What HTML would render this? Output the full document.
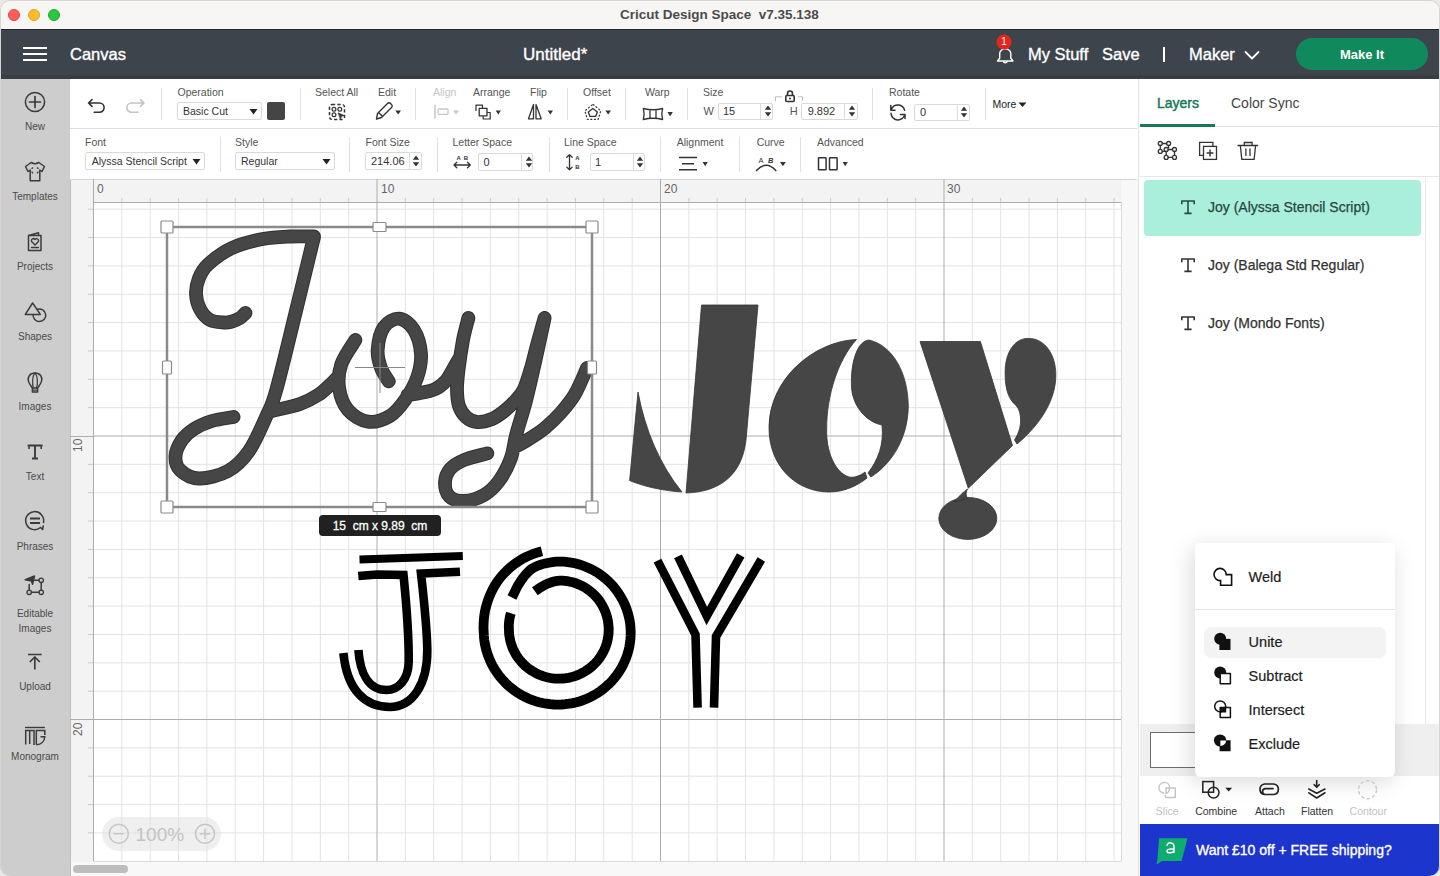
<!DOCTYPE html>
<html><head><meta charset="utf-8">
<style>
*{margin:0;padding:0;box-sizing:border-box}
html,body{width:1440px;height:876px;overflow:hidden;background:#fff}
body{position:relative;font-family:"Liberation Sans",sans-serif;color:#333}
.a{position:absolute}
.t{position:absolute;white-space:nowrap;line-height:1}
svg{position:absolute;overflow:visible}
#title{left:0;top:0;width:1440px;height:30px;background:#f7f6f4;border-bottom:1px solid #25282c}
#hdr{left:0;top:30px;width:1440px;height:49px;background:#3d444b;box-shadow:inset 0 -4px 0 #383e44}
#side{left:0;top:79px;width:70px;height:797px;background:#cdcdcd}
#tb{left:70px;top:79px;width:1069px;height:100px;background:#fff}
#canvas{left:70px;top:179px;width:1069px;height:697px;background:#f8f8f8}
#rp{left:1138px;top:79px;width:302px;height:797px;background:#fff;border-left:1px solid #e2e2e2}
.lbl{font-size:10px;color:#555}
.sl{font-size:10px;color:#4a4a4a;text-align:center;width:70px;left:0}
.dd{position:absolute;border:1px solid #d3d3d3;border-radius:2px;background:#fff;font-size:10.5px;color:#333}
.vd{position:absolute;width:1px;background:#dcdcdc}
</style></head><body>
<div id="title" class="a"></div>
<div id="hdr" class="a"></div>
<div id="side" class="a"></div>
<div id="tb" class="a"></div>
<div id="canvas" class="a"></div>
<div id="rp" class="a"></div>
<div class="a" style="left:70px;top:179px;width:1px;height:697px;background:#bdbdbd"></div>

<div class="a" style="left:8px;top:9px;width:12px;height:12px;border-radius:50%;background:#fe5f57;border:0.5px solid #e0443e"></div>
<div class="a" style="left:28px;top:9px;width:12px;height:12px;border-radius:50%;background:#febc2e;border:0.5px solid #dea123"></div>
<div class="a" style="left:48px;top:9px;width:12px;height:12px;border-radius:50%;background:#28c840;border:0.5px solid #1aab29"></div>
<div class="t" style="left:620px;top:7.5px;font-size:13.5px;font-weight:bold;color:#4b4b4b">Cricut Design Space&nbsp; v7.35.138</div>


<div class="a" style="left:23px;top:47px;width:24px;height:2px;background:#fff"></div>
<div class="a" style="left:23px;top:53px;width:24px;height:2px;background:#fff"></div>
<div class="a" style="left:23px;top:59px;width:24px;height:2px;background:#fff"></div>
<div class="t" style="left:70px;top:46px;font-size:16.5px;color:#fff;-webkit-text-stroke:0.35px #fff">Canvas</div>
<div class="t" style="left:523px;top:45.5px;font-size:17px;color:#fff;-webkit-text-stroke:0.35px #fff">Untitled*</div>
<div class="t" style="left:1028px;top:46px;font-size:16.5px;color:#fff;-webkit-text-stroke:0.35px #fff">My Stuff</div>
<div class="t" style="left:1102px;top:46px;font-size:16.5px;color:#fff;-webkit-text-stroke:0.35px #fff">Save</div>
<div class="a" style="left:1163px;top:47px;width:2px;height:15px;background:#fff"></div>
<div class="t" style="left:1189px;top:46px;font-size:16.5px;color:#fff;-webkit-text-stroke:0.35px #fff">Maker</div>
<div class="a" style="left:1296px;top:38px;width:132px;height:32px;border-radius:16px;background:#108a5c"></div>
<div class="t" style="left:1296px;top:47.5px;width:132px;text-align:center;font-size:13px;font-weight:bold;color:#fff">Make It</div>


<div class="t sl" style="top:122px">New</div>
<div class="t sl" style="top:192px">Templates</div>
<div class="t sl" style="top:262px">Projects</div>
<div class="t sl" style="top:332px">Shapes</div>
<div class="t sl" style="top:402px">Images</div>
<div class="t sl" style="top:472px">Text</div>
<div class="t sl" style="top:542px">Phrases</div>
<div class="t sl" style="top:608.5px">Editable</div>
<div class="t sl" style="top:623.5px">Images</div>
<div class="t sl" style="top:682px">Upload</div>
<div class="t sl" style="top:752px">Monogram</div>


<div class="a" style="left:70px;top:128px;width:1067px;height:1px;background:#dedede"></div>
<div class="a" style="left:70px;top:179px;width:1067px;height:1px;background:#d6d6d6"></div>

<!--TB-->
<div class="t" style="left:177.5px;top:87.1px;font-size:10.5px;color:#555">Operation</div>
<div class="t" style="left:315px;top:87.1px;font-size:10.5px;color:#555">Select All</div>
<div class="t" style="left:378px;top:87.1px;font-size:10.5px;color:#555">Edit</div>
<div class="t" style="left:473px;top:87.1px;font-size:10.5px;color:#555">Arrange</div>
<div class="t" style="left:530px;top:87.1px;font-size:10.5px;color:#555">Flip</div>
<div class="t" style="left:583px;top:87.1px;font-size:10.5px;color:#555">Offset</div>
<div class="t" style="left:645px;top:87.1px;font-size:10.5px;color:#555">Warp</div>
<div class="t" style="left:703px;top:87.1px;font-size:10.5px;color:#555">Size</div>
<div class="t" style="left:889px;top:87.1px;font-size:10.5px;color:#555">Rotate</div>
<div class="t" style="left:433px;top:87.1px;font-size:10.5px;color:#c4c4c4">Align</div>
<div class="t" style="left:992.5px;top:99.1px;font-size:10.5px;color:#222">More</div>
<svg width="10" height="6" style="left:1018px;top:102px"><path d="M0.5 0.5H8.5L4.5 5Z" fill="#222"/></svg>
<div class="t" style="left:85px;top:136.8px;font-size:10.5px;color:#555">Font</div>
<div class="t" style="left:235px;top:136.8px;font-size:10.5px;color:#555">Style</div>
<div class="t" style="left:365.5px;top:136.8px;font-size:10.5px;color:#555">Font Size</div>
<div class="t" style="left:452.5px;top:136.8px;font-size:10.5px;color:#555">Letter Space</div>
<div class="t" style="left:564px;top:136.8px;font-size:10.5px;color:#555">Line Space</div>
<div class="t" style="left:676.7px;top:136.8px;font-size:10.5px;color:#555">Alignment</div>
<div class="t" style="left:756.7px;top:136.8px;font-size:10.5px;color:#555">Curve</div>
<div class="t" style="left:817px;top:136.8px;font-size:10.5px;color:#555">Advanced</div>
<div class="a" style="left:161px;top:88px;width:1px;height:32px;background:#e0e0e0"></div>
<div class="a" style="left:300px;top:88px;width:1px;height:32px;background:#e0e0e0"></div>
<div class="a" style="left:415px;top:88px;width:1px;height:32px;background:#e0e0e0"></div>
<div class="a" style="left:567px;top:88px;width:1px;height:32px;background:#e0e0e0"></div>
<div class="a" style="left:625px;top:88px;width:1px;height:32px;background:#e0e0e0"></div>
<div class="a" style="left:687px;top:88px;width:1px;height:32px;background:#e0e0e0"></div>
<div class="a" style="left:872px;top:88px;width:1px;height:32px;background:#e0e0e0"></div>
<div class="a" style="left:985px;top:88px;width:1px;height:32px;background:#e0e0e0"></div>
<div class="a" style="left:220px;top:137px;width:1px;height:35px;background:#e0e0e0"></div>
<div class="a" style="left:349px;top:137px;width:1px;height:35px;background:#e0e0e0"></div>
<div class="a" style="left:437px;top:137px;width:1px;height:35px;background:#e0e0e0"></div>
<div class="a" style="left:549px;top:137px;width:1px;height:35px;background:#e0e0e0"></div>
<div class="a" style="left:660px;top:137px;width:1px;height:35px;background:#e0e0e0"></div>
<div class="a" style="left:739px;top:137px;width:1px;height:35px;background:#e0e0e0"></div>
<div class="a" style="left:800px;top:137px;width:1px;height:35px;background:#e0e0e0"></div>
<div class="a" style="left:177px;top:102px;width:85px;height:18px;border:1px solid #d9d9d9;border-radius:2px;background:#fff"></div>
<div class="t" style="left:183px;top:106.1px;font-size:10.5px;color:#333">Basic Cut</div>
<svg width="9" height="7" style="left:249px;top:107.5px"><path d="M0.5 1H8.5L4.5 6.5Z" fill="#222"/></svg>
<div class="a" style="left:267px;top:102px;width:18px;height:18px;border-radius:2px;background:#454545"></div>
<div class="a" style="left:718px;top:102.5px;width:55px;height:17.5px;border:1px solid #d9d9d9;border-radius:2px;background:#fff"></div>
<div class="t" style="left:723px;top:106.4px;font-size:11px;color:#333">15</div>
<div class="a" style="left:760px;top:103px;width:1px;height:16.5px;background:#dcdcdc"></div>
<svg width="8" height="12" style="left:763.5px;top:105.2px"><path d="M0.8 4.8L4 0.6L7.2 4.8Z M0.8 7.2L4 11.4L7.2 7.2Z" fill="#333"/></svg>
<div class="t" style="left:703.5px;top:106.4px;font-size:11px;color:#555">W</div>
<div class="t" style="left:789.7px;top:106.4px;font-size:11px;color:#555">H</div>
<div class="a" style="left:801px;top:102.5px;width:56.5px;height:17.5px;border:1px solid #d9d9d9;border-radius:2px;background:#fff"></div>
<div class="t" style="left:807.7px;top:106.4px;font-size:11px;color:#333">9.892</div>
<div class="a" style="left:844px;top:103px;width:1px;height:16.5px;background:#dcdcdc"></div>
<svg width="8" height="12" style="left:847.5px;top:105.2px"><path d="M0.8 4.8L4 0.6L7.2 4.8Z M0.8 7.2L4 11.4L7.2 7.2Z" fill="#333"/></svg>
<svg width="30" height="14" style="left:775px;top:89px"><path d="M0.5 12V7.8H7 M23 7.8H27.5V12" stroke="#bbb" stroke-width="1" fill="none"/><path d="M12.5 6.5V4.5A2.5 2.5 0 0 1 17.5 4.5V6.5" stroke="#333" stroke-width="1.6" fill="none"/><rect x="10.8" y="6.5" width="8.4" height="6" rx="1" stroke="#333" stroke-width="1.6" fill="none"/><circle cx="15" cy="9.5" r="1" fill="#333"/></svg>
<div class="a" style="left:913.5px;top:103.5px;width:56.5px;height:17.0px;border:1px solid #d9d9d9;border-radius:2px;background:#fff"></div>
<div class="t" style="left:920px;top:107.2px;font-size:11px;color:#333">0</div>
<div class="a" style="left:956.5px;top:104px;width:1px;height:16px;background:#dcdcdc"></div>
<svg width="8" height="12" style="left:960.0px;top:106.0px"><path d="M0.8 4.8L4 0.6L7.2 4.8Z M0.8 7.2L4 11.4L7.2 7.2Z" fill="#333"/></svg>
<div class="a" style="left:85px;top:152px;width:120px;height:18px;border:1px solid #d9d9d9;border-radius:2px;background:#fff"></div>
<div class="t" style="left:91.7px;top:156.1px;font-size:10.5px;color:#333">Alyssa Stencil Script</div>
<svg width="9" height="7" style="left:192px;top:157.5px"><path d="M0.5 1H8.5L4.5 6.5Z" fill="#222"/></svg>
<div class="a" style="left:235px;top:152px;width:100px;height:18px;border:1px solid #d9d9d9;border-radius:2px;background:#fff"></div>
<div class="t" style="left:241px;top:156.1px;font-size:10.5px;color:#333">Regular</div>
<svg width="9" height="7" style="left:322px;top:157.5px"><path d="M0.5 1H8.5L4.5 6.5Z" fill="#222"/></svg>
<div class="a" style="left:365px;top:152px;width:57px;height:18px;border:1px solid #d9d9d9;border-radius:2px;background:#fff"></div>
<div class="t" style="left:371px;top:156.2px;font-size:11px;color:#333">214.06</div>
<div class="a" style="left:408.5px;top:152.5px;width:1px;height:17.0px;background:#dcdcdc"></div>
<svg width="8" height="12" style="left:412.0px;top:155.0px"><path d="M0.8 4.8L4 0.6L7.2 4.8Z M0.8 7.2L4 11.4L7.2 7.2Z" fill="#333"/></svg>
<div class="a" style="left:478px;top:153px;width:55px;height:18px;border:1px solid #d9d9d9;border-radius:2px;background:#fff"></div>
<div class="t" style="left:483.5px;top:157.2px;font-size:11px;color:#333">0</div>
<div class="a" style="left:521px;top:153.5px;width:1px;height:17.0px;background:#dcdcdc"></div>
<svg width="8" height="12" style="left:524.5px;top:156.0px"><path d="M0.8 4.8L4 0.6L7.2 4.8Z M0.8 7.2L4 11.4L7.2 7.2Z" fill="#333"/></svg>
<div class="a" style="left:590px;top:153px;width:55px;height:18px;border:1px solid #d9d9d9;border-radius:2px;background:#fff"></div>
<div class="t" style="left:595px;top:157.2px;font-size:11px;color:#333">1</div>
<div class="a" style="left:632.5px;top:153.5px;width:1px;height:17.0px;background:#dcdcdc"></div>
<svg width="8" height="12" style="left:636.0px;top:156.0px"><path d="M0.8 4.8L4 0.6L7.2 4.8Z M0.8 7.2L4 11.4L7.2 7.2Z" fill="#333"/></svg>
<svg width="1440" height="876" style="left:0;top:0" fill="none" stroke-linecap="round" stroke-linejoin="round">
<!-- undo / redo -->
<path d="M92 99.6 L88.5 103 L92 106.4 M88.5 103 H99.5 A4.6 4.6 0 0 1 99.5 112.2 H94.2" stroke="#333" stroke-width="1.6"/>
<path d="M140.5 99.6 L144 103 L140.5 106.4 M144 103 H131.5 A4.6 4.6 0 0 0 131.5 112.2 H138" stroke="#c4c4c4" stroke-width="1.6"/>
<!-- select all -->
<rect x="329.5" y="104.5" width="15" height="15" rx="2.5" stroke="#333" stroke-width="1.5" stroke-dasharray="3.2 2.2" stroke-linecap="butt"/>
<circle cx="334" cy="109.2" r="1.9" stroke="#333" stroke-width="1.2"/>
<circle cx="339.8" cy="109.2" r="1.9" stroke="#333" stroke-width="1.2"/>
<circle cx="334" cy="114.7" r="1.9" stroke="#333" stroke-width="1.2"/>
<path d="M338.5 113 L344 115.5 L341.5 116.2 L340.5 118.8 Z" fill="#333" stroke="#333" stroke-width="0.8"/>
<!-- edit pencil -->
<path d="M376.5 119 L377.5 113.5 L387.5 103.5 A2 2 0 0 1 390.5 103.5 L391.5 104.5 A2 2 0 0 1 391.5 107.5 L381.5 117.5 Z M378.8 112.8 L381.8 115.8" stroke="#333" stroke-width="1.4"/>
<path d="M395.3 110.5 H401 L398.2 114.4 Z" fill="#333" stroke="none"/>
<!-- align (disabled) -->
<path d="M435 105.5 V118" stroke="#c8c8c8" stroke-width="1.6"/>
<rect x="438" y="109" width="10" height="5.4" rx="1" stroke="#c8c8c8" stroke-width="1.3"/>
<path d="M453 110.5 H459 L456 114.4 Z" fill="#c8c8c8" stroke="none"/>
<!-- arrange -->
<path d="M476 111 V105.2 H482.5 V108" stroke="#333" stroke-width="1.2" stroke-linecap="butt"/>
<rect x="479.2" y="108.3" width="7.8" height="7.5" stroke="#333" stroke-width="1.3"/>
<path d="M487 112.5 H490.2 V119 H483.2 V115.8" stroke="#333" stroke-width="1.2" stroke-linecap="butt"/>
<path d="M495.7 110.5 H500.9 L498.3 114.4 Z" fill="#333" stroke="none"/>
<!-- flip -->
<path d="M533.5 104.5 V118.8 H528.5 Z M536 104.5 V118.8 H541.2 Z" stroke="#333" stroke-width="1.3"/>
<path d="M547.6 110.5 H553 L550.3 114.4 Z" fill="#333" stroke="none"/>
<!-- offset -->
<path d="M592.8 104.3 L600.8 110.8 L598.2 119.4 H587.4 L584.9 110.8 Z" stroke="#333" stroke-width="1.2" stroke-dasharray="2 1.6" stroke-linecap="butt"/>
<path d="M592.8 108.4 L597.4 111.9 L595.6 116.4 H590 L588.3 111.9 Z" stroke="#333" stroke-width="1.3"/>
<path d="M605.3 110.5 H611 L608.2 114.4 Z" fill="#333" stroke="none"/>
<!-- warp -->
<path d="M643.3 108.5 Q653 111 662.6 108.5 Q661 114 662.6 119.5 Q653 117 643.3 119.5 Q645 114 643.3 108.5 Z M650 110 V118.5 M656 110 V118.5" stroke="#333" stroke-width="1.3"/>
<path d="M667.5 112 H672.8 L670.1 116.4 Z" fill="#333" stroke="none"/>
<!-- rotate -->
<path d="M904.6 110.2 A7 7 0 0 0 891.6 108.8 M890.8 105.5 V110.3 H895 M891 113.2 A7 7 0 0 0 904.8 114.6 M900.5 114.4 H905 V118.5" stroke="#333" stroke-width="1.5"/>
<!-- letter space -->
<text x="456.5" y="160" font-family="Liberation Sans" font-size="6" font-weight="bold" fill="#333" stroke="none">A</text>
<text x="463.8" y="160" font-family="Liberation Sans" font-size="6" font-weight="bold" fill="#333" stroke="none">B</text>
<path d="M454 165 H470.3 M456.8 162.2 L454 165 L456.8 167.8 M467.5 162.2 L470.3 165 L467.5 167.8" stroke="#333" stroke-width="1.3"/>
<!-- line space -->
<path d="M569.5 154.6 V169.8 M566.8 157.3 L569.5 154.6 L572.2 157.3 M566.8 167.1 L569.5 169.8 L572.2 167.1" stroke="#333" stroke-width="1.3"/>
<text x="575.2" y="160" font-family="Liberation Sans" font-size="6" font-weight="bold" fill="#333" stroke="none">A</text>
<text x="575.2" y="168.7" font-family="Liberation Sans" font-size="6" font-weight="bold" fill="#333" stroke="none">B</text>
<!-- alignment -->
<path d="M679 157.5 H697 M682 163.7 H694 M679 169.8 H697" stroke="#333" stroke-width="1.5" stroke-linecap="butt"/>
<path d="M702.6 162 H707.8 L705.2 166.3 Z" fill="#333" stroke="none"/>
<!-- curve -->
<text x="758.5" y="163.3" font-family="Liberation Sans" font-size="7.5" fill="#333" stroke="none">A</text>
<text x="768" y="163.3" font-family="Liberation Sans" font-size="7.5" font-style="italic" font-weight="bold" fill="#333" stroke="none">B</text>
<path d="M756.5 170.6 Q766.2 160 775.8 170.6" stroke="#333" stroke-width="1.5"/>
<path d="M780 162 H785.8 L782.9 166.3 Z" fill="#333" stroke="none"/>
<!-- advanced -->
<rect x="818.5" y="157.8" width="7.6" height="12" rx="0.5" stroke="#333" stroke-width="1.5"/>
<rect x="829.5" y="157.8" width="7.6" height="12" rx="0.5" stroke="#333" stroke-width="1.5"/>
<path d="M842.6 162 H847.8 L845.2 166.3 Z" fill="#333" stroke="none"/>
</svg>


<svg width="1440" height="876" style="left:0;top:0">
<rect x="71" y="180" width="1050" height="22" fill="#f3f3f3"/>
<rect x="71" y="180" width="22" height="682" fill="#f3f3f3"/>
<rect x="93" y="202" width="1028" height="659" fill="#fff"/>
<path d="M121.85 202V861 M150.20 202V861 M178.55 202V861 M206.90 202V861 M235.25 202V861 M263.60 202V861 M291.95 202V861 M320.30 202V861 M348.65 202V861 M405.35 202V861 M433.70 202V861 M462.05 202V861 M490.40 202V861 M518.75 202V861 M547.10 202V861 M575.45 202V861 M603.80 202V861 M632.15 202V861 M688.85 202V861 M717.20 202V861 M745.55 202V861 M773.90 202V861 M802.25 202V861 M830.60 202V861 M858.95 202V861 M887.30 202V861 M915.65 202V861 M972.35 202V861 M1000.70 202V861 M1029.05 202V861 M1057.40 202V861 M1085.75 202V861 M1114.10 202V861 M93 209.20H1121 M93 237.55H1121 M93 265.90H1121 M93 294.25H1121 M93 322.60H1121 M93 350.95H1121 M93 379.30H1121 M93 407.65H1121 M93 464.35H1121 M93 492.70H1121 M93 521.05H1121 M93 549.40H1121 M93 577.75H1121 M93 606.10H1121 M93 634.45H1121 M93 662.80H1121 M93 691.15H1121 M93 747.85H1121 M93 776.20H1121 M93 804.55H1121 M93 832.90H1121" stroke="#e3e3e3" stroke-width="1" fill="none"/>
<path d="M93.50 202V861 M377.00 202V861 M660.50 202V861 M944.00 202V861 M93 436.00H1121 M93 719.50H1121" stroke="#adadad" stroke-width="1" fill="none"/>
<path d="M121.85 198V202 M150.20 198V202 M178.55 198V202 M206.90 198V202 M235.25 198V202 M263.60 198V202 M291.95 198V202 M320.30 198V202 M348.65 198V202 M405.35 198V202 M433.70 198V202 M462.05 198V202 M490.40 198V202 M518.75 198V202 M547.10 198V202 M575.45 198V202 M603.80 198V202 M632.15 198V202 M688.85 198V202 M717.20 198V202 M745.55 198V202 M773.90 198V202 M802.25 198V202 M830.60 198V202 M858.95 198V202 M887.30 198V202 M915.65 198V202 M972.35 198V202 M1000.70 198V202 M1029.05 198V202 M1057.40 198V202 M1085.75 198V202 M1114.10 198V202 M88 209.20H93 M88 237.55H93 M88 265.90H93 M88 294.25H93 M88 322.60H93 M88 350.95H93 M88 379.30H93 M88 407.65H93 M88 464.35H93 M88 492.70H93 M88 521.05H93 M88 549.40H93 M88 577.75H93 M88 606.10H93 M88 634.45H93 M88 662.80H93 M88 691.15H93 M88 747.85H93 M88 776.20H93 M88 804.55H93 M88 832.90H93" stroke="#c9c9c9" stroke-width="1" fill="none"/>
<path d="M93.5 179V202 M377 179V202 M660.5 179V202 M944 179V202 M70 436.5H93 M70 719.5H93 M93 202.5H1121" stroke="#adadad"/><path d="M1121.5 202V861 M93 861.5H1121" stroke="#dadada" stroke-width="1" fill="none"/>
</svg>
<div class="t" style="left:97px;top:183px;font-size:12px;color:#666">0</div>
<div class="t" style="left:381px;top:183px;font-size:12px;color:#666">10</div>
<div class="t" style="left:664px;top:183px;font-size:12px;color:#666">20</div>
<div class="t" style="left:947px;top:183px;font-size:12px;color:#666">30</div>
<div class="t" style="left:72px;top:440px;font-size:12px;color:#666;transform-origin:0 0;transform:translate(0,12px) rotate(-90deg)">10</div>
<div class="t" style="left:72px;top:724px;font-size:12px;color:#666;transform-origin:0 0;transform:translate(0,12px) rotate(-90deg)">20</div>

<svg width="1440" height="876" style="left:0;top:0">
<path d="M245.5 313 C244.6 313.8 242.2 316.6 240 318 C237.8 319.4 234.7 320.8 232 321.5 C229.3 322.2 227.7 322.8 224 322.5 C220.3 322.2 214.0 322.2 210 320 C206.0 317.8 202.3 313.3 200 309 C197.7 304.7 196.2 299.2 196 294 C195.8 288.8 197.0 282.9 199 278 C201.0 273.1 202.5 269.5 208 264.5 C213.5 259.5 222.9 252.2 232 248 C241.1 243.8 253.0 240.9 262.7 239 C272.4 237.1 281.4 236.9 290 236.5 C298.6 236.1 310.0 236.5 314 236.5 M314 237 C310.8 250.0 301.3 289.3 295 315 C288.7 340.7 280.8 374.0 276 391 C271.2 408.0 270.5 407.0 266 417 C261.5 427.0 255.3 442.0 249 451 C242.7 460.0 236.3 466.4 228 471 C219.7 475.6 207.0 478.7 199 478.5 C191.0 478.3 183.9 473.8 180 470 C176.1 466.2 175.2 461.0 175.5 456 C175.8 451.0 178.9 444.5 182 440 C185.1 435.5 189.0 432.2 194 429 C199.0 425.8 205.4 423.0 212 421 C218.6 419.0 230.0 417.7 233.6 417 M272 411 C276.7 409.8 292.3 406.7 300 404 C307.7 401.3 313.0 398.2 318 395 C323.0 391.8 326.8 387.8 330 385 C333.2 382.2 335.8 379.2 337 378 M355.4 340 C353.0 344.1 344.0 356.3 341.3 364.3 C338.6 372.3 338.0 380.4 339.1 388 C340.2 395.6 343.2 404.4 348 410 C352.8 415.6 361.0 420.7 368 421.7 C375.0 422.7 383.8 419.6 390 416 C396.2 412.4 400.5 406.3 405 400 C409.5 393.7 414.3 385.7 417 378 C419.7 370.3 421.5 362.0 421 354 C420.5 346.0 417.6 335.9 414 330 C410.4 324.1 404.2 319.2 399.2 318.7 C394.2 318.2 387.6 321.9 384 327 C380.4 332.1 378.2 342.7 377.7 349.5 C377.2 356.3 379.1 362.7 381 368 C382.9 373.3 387.5 379.2 388.8 381.4 M407.5 395 C409.2 394.8 413.4 394.4 418 393.5 C422.6 392.6 430.2 391.4 434.8 389.3 C439.4 387.2 442.9 384.1 445.8 381 C448.7 377.9 449.7 374.8 452 371 C454.3 367.2 458.2 360.2 459.5 358 M468.4 318 C467.5 321.7 464.6 331.3 463 340 C461.4 348.7 459.5 361.7 458.5 370 C457.5 378.3 456.9 384.0 457 390 C457.1 396.0 457.5 401.5 459 406 C460.5 410.5 463.0 414.3 466 417 C469.0 419.7 472.7 421.7 477 422 C481.3 422.3 487.3 420.9 492 419 C496.7 417.1 501.0 413.7 505 410.5 C509.0 407.3 512.8 403.6 516 400 C519.2 396.4 521.5 394.3 524 389 C526.5 383.7 528.8 375.3 531 368 C533.2 360.7 534.7 353.3 537 345 C539.3 336.7 543.3 322.5 544.6 318 M544.6 318 C543.1 325.0 538.6 346.2 535.5 360 C532.4 373.8 529.2 388.3 526 400.7 C522.8 413.1 518.9 424.6 516.3 434.3 C513.7 444.0 513.5 451.2 510.6 459 C507.7 466.8 503.4 475.0 499 481 C494.6 487.0 489.8 491.7 484 495 C478.2 498.3 469.8 500.8 464 501 C458.2 501.2 452.6 499.6 449.4 496.5 C446.2 493.4 444.8 487.0 445 482.4 C445.2 477.8 447.2 472.5 450.4 468.8 C453.6 465.1 457.9 462.6 464 460 C470.1 457.4 483.4 454.4 487.3 453.3 M515 447 C516.5 446.2 521.0 443.8 524 442 C527.0 440.2 529.5 438.8 533 436.5 C536.5 434.2 540.3 432.0 545 428 C549.7 424.0 556.0 418.2 561 412.5 C566.0 406.8 570.7 401.4 575 394 C579.3 386.6 585.0 372.3 587 368" stroke="#303030" stroke-width="13.8" fill="none" stroke-linecap="round" stroke-linejoin="round"/>
<path d="M245.5 313 C244.6 313.8 242.2 316.6 240 318 C237.8 319.4 234.7 320.8 232 321.5 C229.3 322.2 227.7 322.8 224 322.5 C220.3 322.2 214.0 322.2 210 320 C206.0 317.8 202.3 313.3 200 309 C197.7 304.7 196.2 299.2 196 294 C195.8 288.8 197.0 282.9 199 278 C201.0 273.1 202.5 269.5 208 264.5 C213.5 259.5 222.9 252.2 232 248 C241.1 243.8 253.0 240.9 262.7 239 C272.4 237.1 281.4 236.9 290 236.5 C298.6 236.1 310.0 236.5 314 236.5 M314 237 C310.8 250.0 301.3 289.3 295 315 C288.7 340.7 280.8 374.0 276 391 C271.2 408.0 270.5 407.0 266 417 C261.5 427.0 255.3 442.0 249 451 C242.7 460.0 236.3 466.4 228 471 C219.7 475.6 207.0 478.7 199 478.5 C191.0 478.3 183.9 473.8 180 470 C176.1 466.2 175.2 461.0 175.5 456 C175.8 451.0 178.9 444.5 182 440 C185.1 435.5 189.0 432.2 194 429 C199.0 425.8 205.4 423.0 212 421 C218.6 419.0 230.0 417.7 233.6 417 M272 411 C276.7 409.8 292.3 406.7 300 404 C307.7 401.3 313.0 398.2 318 395 C323.0 391.8 326.8 387.8 330 385 C333.2 382.2 335.8 379.2 337 378 M355.4 340 C353.0 344.1 344.0 356.3 341.3 364.3 C338.6 372.3 338.0 380.4 339.1 388 C340.2 395.6 343.2 404.4 348 410 C352.8 415.6 361.0 420.7 368 421.7 C375.0 422.7 383.8 419.6 390 416 C396.2 412.4 400.5 406.3 405 400 C409.5 393.7 414.3 385.7 417 378 C419.7 370.3 421.5 362.0 421 354 C420.5 346.0 417.6 335.9 414 330 C410.4 324.1 404.2 319.2 399.2 318.7 C394.2 318.2 387.6 321.9 384 327 C380.4 332.1 378.2 342.7 377.7 349.5 C377.2 356.3 379.1 362.7 381 368 C382.9 373.3 387.5 379.2 388.8 381.4 M407.5 395 C409.2 394.8 413.4 394.4 418 393.5 C422.6 392.6 430.2 391.4 434.8 389.3 C439.4 387.2 442.9 384.1 445.8 381 C448.7 377.9 449.7 374.8 452 371 C454.3 367.2 458.2 360.2 459.5 358 M468.4 318 C467.5 321.7 464.6 331.3 463 340 C461.4 348.7 459.5 361.7 458.5 370 C457.5 378.3 456.9 384.0 457 390 C457.1 396.0 457.5 401.5 459 406 C460.5 410.5 463.0 414.3 466 417 C469.0 419.7 472.7 421.7 477 422 C481.3 422.3 487.3 420.9 492 419 C496.7 417.1 501.0 413.7 505 410.5 C509.0 407.3 512.8 403.6 516 400 C519.2 396.4 521.5 394.3 524 389 C526.5 383.7 528.8 375.3 531 368 C533.2 360.7 534.7 353.3 537 345 C539.3 336.7 543.3 322.5 544.6 318 M544.6 318 C543.1 325.0 538.6 346.2 535.5 360 C532.4 373.8 529.2 388.3 526 400.7 C522.8 413.1 518.9 424.6 516.3 434.3 C513.7 444.0 513.5 451.2 510.6 459 C507.7 466.8 503.4 475.0 499 481 C494.6 487.0 489.8 491.7 484 495 C478.2 498.3 469.8 500.8 464 501 C458.2 501.2 452.6 499.6 449.4 496.5 C446.2 493.4 444.8 487.0 445 482.4 C445.2 477.8 447.2 472.5 450.4 468.8 C453.6 465.1 457.9 462.6 464 460 C470.1 457.4 483.4 454.4 487.3 453.3 M515 447 C516.5 446.2 521.0 443.8 524 442 C527.0 440.2 529.5 438.8 533 436.5 C536.5 434.2 540.3 432.0 545 428 C549.7 424.0 556.0 418.2 561 412.5 C566.0 406.8 570.7 401.4 575 394 C579.3 386.6 585.0 372.3 587 368" stroke="#464646" stroke-width="11.8" fill="none" stroke-linecap="round" stroke-linejoin="round"/>
<g fill="#464646" stroke="#333" stroke-width="0.8">
<path d="M701.5 305 L758 305 L746 440 C742 475 720 492 686 493 Z"/>
<path d="M638 392 C645 430 660 465 682 492 C665 491 645 487 629.6 480.6 Z"/>
<path d="M856.5 339.5 C815 341 769 378 769 428 C769 466 796 492 829 492 C844 492 857 486 867 478 L865 472 C860 476 854 478 849 477 C834 472 826 450 826.7 428.8 C826.7 395 838 360 856.5 339.5 Z"/>
<path d="M868.8 340 C892 345 908 372 908.3 406 C908 440 890 465 870.9 477 L868 473 C878 460 884 445 882 425 C866 422 851 405 851.4 383.7 C851 360 858 341 868.8 340 Z"/>
<path d="M920 341.5 L980.4 341.5 L1012.5 445.6 L968.3 488.2 Z"/>
<path d="M1028.2 338.4 C1045 338 1056 355 1055.8 375 C1056 400 1040 425 1017 444 L1014.5 440 C1019.5 432 1021 425 1020.5 418 C1020 411 1018 407.5 1015 404.5 C1009 399 1005 390 1005.1 372.5 C1005 352 1015 338 1028.2 338.4 Z"/>
<ellipse cx="967.8" cy="518.4" rx="29" ry="21"/>
<path d="M954 502 C959 496 963 492.5 967.5 489 C966 492 965.5 495 967.5 498.5 Z"/>
</g>
<g stroke="#000" stroke-width="8" fill="none" stroke-linejoin="miter">
<path d="M359.5 559.6 L462.8 555.9"/>
<path d="M358.3 576 L377 574.5 L403.5 575 C406 600 409 630 408.7 661.5 C408.5 680 398 690 386.5 690 C368 690 360 672 358.4 650" stroke-width="8.6"/>
<path d="M460 571.7 L421 573.5 C424 600 427 630 427.3 650 C427.5 685 412 707 390 707 C365 707 347 690 343.4 653" stroke-width="8.6"/>
<path d="M541.9 551.3 L537.7 552.4 L533.5 553.8 L529.5 555.4 L525.6 557.2 L521.8 559.3 L518.1 561.6 L514.6 564.0 L511.3 566.6 L508.1 569.4 L505.0 572.4 L502.1 575.5 L499.5 578.7 L497.0 582.1 L494.8 585.6 L492.7 589.3 L490.9 593.0 L489.3 596.7 L487.9 600.5 L486.7 604.4 L485.6 608.3 L484.8 612.2 L484.2 616.2 L483.8 620.1 L483.6 624.1 L483.5 628.0 L483.7 631.9 L483.9 635.8 L484.2 639.7 L484.8 643.5 L485.6 647.3 L486.6 651.1 L487.8 654.8 L489.2 658.4 L490.7 661.9 L492.4 665.4 L494.3 668.7 L496.4 671.9 L498.6 675.1 L501.0 678.1 L503.6 680.9 L506.2 683.7 L509.0 686.3 L512.0 688.7 L515.0 691.0 L518.2 693.1 L521.4 695.0 L524.8 696.8 L528.3 698.4 L531.8 699.9 L535.4 701.1 L539.0 702.2 L542.7 703.0 L546.4 703.7 L550.2 704.2 L554.0 704.5 L557.8 704.6 L561.6 704.5 L565.3 704.2 L569.1 703.7 L572.8 703.1 L576.5 702.2 L580.2 701.2 L583.8 699.9 L587.3 698.5 L590.8 696.9 L594.1 695.1 L597.4 693.1 L600.6 691.0 L603.6 688.7 L606.5 686.2 L609.3 683.6 L612.0 680.9 L614.5 678.0 L616.8 675.0 L619.0 671.8 L621.1 668.5 L622.9 665.2 L624.5 661.7 L626.0 658.2 L627.3 654.5 L628.4 650.8 L629.3 647.1 L629.9 643.3 L630.4 639.5 L630.6 635.7 L630.7 631.8 L630.5 628.0 L630.2 624.1 L629.6 620.3 L628.8 616.6 L627.8 612.9 L626.6 609.2 L625.3 605.7 L623.7 602.2 L621.9 598.8 L620.0 595.5 L617.9 592.3 L615.6 589.2 L613.2 586.2 L610.6 583.4 L607.9 580.8 L605.1 578.3 L602.1 575.9 L599.0 573.7 L595.8 571.7 L592.5 569.8 L589.1 568.2 L585.6 566.7 L582.1 565.4 L578.5 564.3 L574.9 563.3 L571.2 562.6 L567.5 562.1 L563.7 561.7 L560.0 561.6 L556.2 561.7 L552.5 562.1 L548.8 562.7 L545.2 563.4 L541.6 564.4 L538.2 565.6 L534.8 567.1 L531.6 568.9 L528.7 571.3 L526.1 574.0 L523.7 576.9 L521.6 579.8 L519.6 582.8 L517.8 585.7 L516.2 588.8 L514.8 591.8 L513.4 594.7 L512.0 597.5" stroke-width="9.8"/>
<path d="M510.9 613.2 L510.1 615.7 L509.6 618.3 L509.2 620.9 L508.9 623.6 L508.8 626.2 L508.9 628.8 L509.0 631.4 L509.1 634.1 L509.5 636.6 L509.9 639.2 L510.5 641.8 L511.3 644.3 L512.1 646.7 L513.1 649.1 L514.3 651.5 L515.5 653.8 L516.8 656.0 L518.3 658.1 L519.9 660.2 L521.6 662.1 L523.4 664.0 L525.2 665.8 L527.2 667.5 L529.2 669.1 L531.4 670.5 L533.6 671.9 L535.8 673.1 L538.1 674.2 L540.5 675.2 L542.9 676.1 L545.4 676.9 L547.9 677.5 L550.4 678.0 L552.9 678.4 L555.5 678.6 L558.0 678.7 L560.6 678.7 L563.2 678.5 L565.7 678.2 L568.3 677.8 L570.8 677.3 L573.2 676.6 L575.7 675.8 L578.1 674.9 L580.4 673.9 L582.7 672.7 L585.0 671.4 L587.2 670.0 L589.2 668.5 L591.3 666.9 L593.2 665.2 L595.0 663.4 L596.8 661.5 L598.4 659.5 L600.0 657.4 L601.4 655.2 L602.7 653.0 L603.9 650.7 L605.0 648.3 L605.9 645.9 L606.7 643.4 L607.4 640.9 L607.9 638.3 L608.3 635.8 L608.6 633.2 L608.7 630.6 L608.7 628.0 L608.5 625.4 L608.2 622.8 L607.8 620.2 L607.2 617.7 L606.5 615.1 L605.7 612.7 L604.7 610.2 L603.6 607.9 L602.4 605.6 L601.1 603.3 L599.6 601.2 L598.1 599.1 L596.4 597.1 L594.6 595.2 L592.8 593.4 L590.8 591.7 L588.8 590.1 L586.6 588.6 L584.4 587.2 L582.1 586.0 L579.8 584.9 L577.4 583.9 L575.0 583.0 L572.5 582.3 L570.0 581.7 L567.4 581.2 L564.9 580.9 L562.3 580.7 L559.8 580.7 L557.2 580.9 L554.7 581.3 L552.2 582.0 L549.8 582.8 L547.4 583.7 L545.2 584.8 L543.0 586.0 L540.9 587.2 L538.8 588.5 L536.8 589.9 L534.9 591.3" stroke-width="9.8"/>
<path d="M657.5 560.6 L695.5 634.6 L697.6 707.6" stroke-width="8.6"/>
<path d="M678 556.4 L706.8 616 L740.7 555.4" stroke-width="8.6"/>
<path d="M761.3 559.5 L716 636.6 L714 707.6" stroke-width="8.6"/>
</g>
<g stroke="#8a8a8a" fill="none">
<rect x="167" y="227" width="425" height="280" stroke-width="2.5"/>
<path d="M355 367.5H405 M380 343V393" stroke="#888" stroke-width="1"/>
</g>
<g fill="#fff" stroke="#8a8a8a" stroke-width="1.2">
<rect x="161" y="221" width="12" height="12" rx="1"/>
<rect x="586" y="221" width="12" height="12" rx="1"/>
<rect x="161" y="501" width="12" height="12" rx="1"/>
<rect x="586" y="501" width="12" height="12" rx="1"/>
<rect x="373" y="222.5" width="13" height="9" rx="1"/>
<rect x="373" y="502.5" width="13" height="9" rx="1"/>
<rect x="162.5" y="361" width="9" height="13" rx="1"/>
<rect x="587.5" y="361" width="9" height="13" rx="1"/>
</g>
</svg>
<div class="a" style="left:319px;top:515px;width:122px;height:21px;border-radius:4px;background:#212121"></div>
<div class="t" style="left:319px;top:519.5px;width:122px;text-align:center;font-size:12px;color:#fff;-webkit-text-stroke:0.3px #fff">15&nbsp; cm x 9.89&nbsp; cm</div>

<div class="t" style="left:1157px;top:96px;font-size:14px;color:#17785a;-webkit-text-stroke:0.45px #17785a">Layers</div>
<div class="t" style="left:1231px;top:96px;font-size:14px;color:#444">Color Sync</div>
<div class="a" style="left:1140px;top:126px;width:300px;height:1px;background:#e0e0e0"></div>
<div class="a" style="left:1140px;top:124px;width:75px;height:3px;background:#17785a"></div>
<div class="a" style="left:1140px;top:176px;width:300px;height:1px;background:#e6e6e6"></div>
<div class="a" style="left:1144px;top:180px;width:277px;height:56px;border-radius:4px;background:#aaefdc"></div>
<div class="t" style="left:1208px;top:200px;font-size:14px;color:#27473d;-webkit-text-stroke:0.25px currentColor">Joy (Alyssa Stencil Script)</div>
<div class="t" style="left:1208px;top:258px;font-size:14px;color:#333;-webkit-text-stroke:0.25px currentColor">Joy (Balega Std Regular)</div>
<div class="t" style="left:1208px;top:316px;font-size:14px;color:#333;-webkit-text-stroke:0.25px currentColor">Joy (Mondo Fonts)</div>

<div class="a" style="left:1140px;top:824px;width:300px;height:52px;background:#1c35cc;border-bottom-right-radius:10px"></div>
<div class="t" style="left:1196px;top:842.5px;font-size:14px;color:#fff;-webkit-text-stroke:0.35px #fff">Want £10 off + FREE shipping?</div>
<svg width="1440" height="876" style="left:0;top:0" fill="none" stroke-linecap="round" stroke-linejoin="round">
<!-- sidebar -->
<g stroke="#3a3a3a" stroke-width="1.5">
<circle cx="35" cy="102" r="9.6"/>
<path d="M35 96.5 V107.5 M29.5 102 H40.5" stroke-width="1.7"/>
<path d="M31.2 162.5 L25.5 166.5 L28 171.5 L30.2 170 V180.8 H39.8 V170 L42 171.5 L44.5 166.5 L38.8 162.5 Q35 165 31.2 162.5 Z"/>
<path d="M32 167.8 h1.2 M36.8 167.8 h1.2 M32 172.8 h1.2 M36.8 172.8 h1.2 M32 167.8 v1.2 M38 167.8 v1.2 M32 171.6 v1.2 M38 171.6 v1.2" stroke-width="1.2" stroke-linecap="butt"/>
<path d="M28.5 235.5 L38.5 232.8 V235.5 M28.5 235.5 H41 V250.5 H28.5 Z"/>
<path d="M35 245 L31.8 241.8 A1.8 1.8 0 0 1 35 239.5 A1.8 1.8 0 0 1 38.2 241.8 Z" stroke-width="1.4"/>
<path d="M31.5 247.5 H38.5" stroke-width="1.3"/>
<path d="M32.6 303 L25.3 314.4 H40.3 Z"/>
<path d="M33.2 314.4 A6.3 6.3 0 1 0 37.5 309.3" />
<path d="M35 373 C29.5 373 27.8 377 28.3 380.5 C28.8 384 31.5 386.5 32.3 388 H37.7 C38.5 386.5 41.2 384 41.7 380.5 C42.2 377 40.5 373 35 373 Z"/>
<path d="M35 373 C32.3 375.5 32 384 33.5 388 M35 373 C37.7 375.5 38 384 36.5 388" stroke-width="1.2"/>
<path d="M32.3 388.5 V392 H37.7 V388.5 M32.3 390.2 H37.7" stroke-width="1.3"/>
<path d="M28.5 446.5 V445.5 H41.7 V446.5 M35 445.5 V458.5 M32 458.5 H38" stroke-width="1.9" stroke-linecap="butt"/>
<path d="M29 449 V446.2 M41.2 449 V446.2" stroke-width="1.6" stroke-linecap="butt"/>
<path d="M40.5 527.5 A9 9 0 1 1 43.5 522.5" />
<path d="M40.5 527.5 L42.6 529.5 L43.2 526" stroke-width="1.5"/>
<path d="M30 518.5 H40 M30 523 H40" stroke-width="1.8" stroke-linecap="butt"/>
<path d="M25.2 579.8 L34.5 576 L32.5 584.2 L31.5 581 Z" fill="#3a3a3a"/>
<path d="M34 580.3 H39 M41.2 582.5 V590 M31.3 592.3 H38.9 M29.2 584.5 V590"/>
<circle cx="41.2" cy="580.3" r="2.2" stroke-width="1.3"/>
<circle cx="29.2" cy="592.3" r="2.2" stroke-width="1.3"/>
<circle cx="41.2" cy="592.3" r="2.2" stroke-width="1.3"/>
<path d="M28 654.5 H41.7 M34.8 669.5 V657 M29.8 662 L34.8 657 L39.8 662" stroke-width="1.7" stroke-linecap="butt"/>
<path d="M25 727.5 H44.9" stroke-width="1.4" stroke-linecap="butt"/>
<path d="M25.7 744.5 V730.5 H34 V745 M29.7 744 V730.5 M36.3 744.8 V730.5 H44.8 V735 M36.3 744.8 C41 744.5 44.6 741.5 44.8 736.8 H40.5" stroke-width="1.5" stroke-linecap="butt" stroke-linejoin="miter"/>
</g>
<!-- header bell -->
<path d="M997.5 61 H1013 L1010.8 58.2 V53 A5.8 5.8 0 0 0 999.7 53 V58.2 Z M1003.2 61.2 A2.1 2.1 0 0 0 1007.3 61.2" stroke="#fff" stroke-width="1.4"/>
<circle cx="1004" cy="42" r="7.6" fill="#e3261b"/>
<path d="M1245.5 52 L1252 58.5 L1258.5 52" stroke="#fff" stroke-width="1.8"/>
<!-- right panel top icons -->
<g stroke="#333" stroke-width="1.3">
<path d="M1162.3 143.5 H1166.6 M1160.3 145.5 V149.4 M1162.3 151.4 H1164.2 M1168.6 145.5 V147.5"/>
<path d="M1168.2 149.5 H1172.5 M1166.2 151.5 V155.4 M1168.2 157.4 H1172.5 M1174.5 151.5 V155.4"/>
<circle cx="1160.3" cy="143.5" r="2"/><circle cx="1168.6" cy="143.5" r="2"/><circle cx="1160.3" cy="151.4" r="2"/>
<circle cx="1166.2" cy="149.5" r="2"/><circle cx="1174.5" cy="149.5" r="2"/><circle cx="1166.2" cy="157.4" r="2"/><circle cx="1174.5" cy="157.4" r="2"/>
<path d="M1203.4 155.4 H1199.6 V142.4 H1212.9 V146.3" stroke-linejoin="miter" stroke-linecap="butt"/>
<rect x="1203.5" y="146.4" width="13" height="13" stroke-linejoin="miter"/>
<path d="M1210 149.6 V156.4 M1206.6 153 H1213.4" stroke-width="1.4" stroke-linecap="butt"/>
<path d="M1238 145.5 H1257.6 M1244.3 145.3 V142.5 H1252.1 V145.3 M1240.3 145.5 L1241.8 159.3 H1254.1 L1255.6 145.5 M1245.9 149 V155.5 M1250 149 V155.5" stroke-linejoin="miter"/>
</g>
<!-- layer T icons -->
<path d="M1181.8 204.3 V201 H1194.2 V204.3 M1188 201 V213.4 M1184.4 213.4 H1191.6" stroke="#274a3f" stroke-width="1.6" stroke-linecap="butt"/>
<path d="M1181.8 262.3 V259 H1194.2 V262.3 M1188 259 V271.4 M1184.4 271.4 H1191.6" stroke="#333" stroke-width="1.6" stroke-linecap="butt"/>
<path d="M1181.8 320.3 V317 H1194.2 V320.3 M1188 317 V329.4 M1184.4 329.4 H1191.6" stroke="#333" stroke-width="1.6" stroke-linecap="butt"/>
</svg>
<!--ICONS3-->
<!-- right panel lower -->
<div class="a" style="left:1425px;top:177px;width:1px;height:547px;background:#ececec"></div>
<div class="a" style="left:1140px;top:724px;width:300px;height:52px;background:#efefef"></div>
<div class="a" style="left:1150px;top:732px;width:60px;height:36px;background:#fff;border:1px solid #6d6d6d;border-right:none"></div>
<!-- popup -->
<div class="a" style="left:1195px;top:543px;width:200px;height:234px;background:#fff;border-radius:4px 4px 6px 6px;box-shadow:-3px 5px 22px rgba(0,0,0,0.15)"></div>
<div class="a" style="left:1195px;top:609px;width:200px;height:1px;background:#e4e4e4"></div>
<div class="a" style="left:1204px;top:627px;width:182px;height:31px;background:#f3f3f3;border-radius:7px"></div>
<div class="t" style="left:1248.6px;top:569.7px;font-size:14.5px;color:#1e1e1e;-webkit-text-stroke:0.2px currentColor">Weld</div>
<div class="t" style="left:1248.6px;top:634.7px;font-size:14.5px;color:#1e1e1e;-webkit-text-stroke:0.2px currentColor">Unite</div>
<div class="t" style="left:1248.6px;top:668.7px;font-size:14.5px;color:#1e1e1e;-webkit-text-stroke:0.2px currentColor">Subtract</div>
<div class="t" style="left:1248.6px;top:702.7px;font-size:14.5px;color:#1e1e1e;-webkit-text-stroke:0.2px currentColor">Intersect</div>
<div class="t" style="left:1248.6px;top:736.7px;font-size:14.5px;color:#1e1e1e;-webkit-text-stroke:0.2px currentColor">Exclude</div>
<div class="t" style="left:1155.8px;top:805.6px;font-size:10.5px;color:#c2c2c2">Slice</div>
<div class="t" style="left:1195.2px;top:805.6px;font-size:10.5px;color:#333">Combine</div>
<div class="t" style="left:1255px;top:805.6px;font-size:10.5px;color:#333">Attach</div>
<div class="t" style="left:1301px;top:805.6px;font-size:10.5px;color:#333">Flatten</div>
<div class="t" style="left:1349.6px;top:805.6px;font-size:10.5px;color:#c2c2c2">Contour</div>
<svg width="1440" height="876" style="left:0;top:0" fill="none" stroke-linecap="round" stroke-linejoin="round">
<!-- popup icons -->
<path d="M1220.6 585.2 V580.6 A6.1 6.1 0 1 1 1226.2 574.6 H1231.6 V585.2 Z" stroke="#111" stroke-width="1.6" stroke-linejoin="miter"/>
<g fill="#111">
<circle cx="1220.2" cy="638.8" r="6"/><rect x="1219.4" y="638.9" width="11.1" height="11.1"/>
<circle cx="1220.2" cy="672.6" r="6"/>
<path d="M1226.2 706.4 A6 6 0 0 0 1220.2 712.6 H1226.2 Z"/>
<path d="M1220.2 734.4 A6 6 0 0 0 1219.6 746.4 V751.2 H1230.6 V740.2 H1226.2 A6 6 0 0 0 1220.2 734.4 Z"/>
</g>
<rect x="1220.2" y="673.6" width="10.2" height="10.2" fill="#fff" stroke="#111" stroke-width="1.5"/>
<circle cx="1220.2" cy="706.4" r="5.5" stroke="#111" stroke-width="1.5"/>
<rect x="1220.2" y="707.4" width="10.2" height="10.2" stroke="#111" stroke-width="1.5"/>
<path d="M1226.2 706.4 A6 6 0 0 1 1220.2 712.4 V707.4 H1226 Z" fill="#111"/>
<path d="M1220.4 740.4 H1226.2 A6 6 0 0 1 1220.4 746 Z" fill="#fff"/>
<!-- bottom tools -->
<path d="M1163.8 793 A5.3 5.3 0 1 1 1169.6 787.2" stroke="#c4c4c4" stroke-width="1.4"/>
<path d="M1166 788 H1175.3 V797.5 H1165.5 V795.5 M1166 788 V793.5 A5.3 5.3 0 0 0 1169.4 788.5" stroke="#c4c4c4" stroke-width="1.4"/>
<rect x="1202.8" y="781.6" width="10.8" height="10.6" stroke="#222" stroke-width="1.5" stroke-linejoin="miter"/>
<circle cx="1213.6" cy="792.6" r="5.4" stroke="#222" stroke-width="1.5"/>
<path d="M1225.3 787.8 H1232.1 L1228.7 791.5 Z" fill="#222" stroke="none"/>
<path d="M1264.6 794.5 A5.3 5.3 0 0 1 1264.6 784 H1273.8 A5.3 5.3 0 0 1 1273.8 794.5 H1265 A3 3 0 0 1 1265 788.6 H1273" stroke="#222" stroke-width="1.7"/>
<path d="M1316.7 780.6 V787 M1314.2 784.7 L1316.7 787.3 L1319.2 784.7 M1308.8 789 L1316.7 793.2 L1325 789 M1308.8 792.8 L1316.7 798 L1325 792.8" stroke="#222" stroke-width="1.6"/>
<circle cx="1367.5" cy="789.7" r="9" stroke="#c8c8c8" stroke-width="1.4" stroke-dasharray="3.4 2.4" stroke-linecap="butt"/>
<!-- banner icon -->
<path d="M1159 838.2 H1187.5 L1181.6 861 H1162 L1156.5 864.5 L1157.5 858.5 Z" fill="#0fab6f"/>
<path d="M1167 845.3 A3.6 3.6 0 0 1 1174 846.3 V852.6 M1174 849.2 C1170.5 848.4 1167 849.2 1167 851 C1167 853.2 1172 853.8 1174 850.8" stroke="#fff" stroke-width="1.5"/>
<!-- zoom control -->
</svg>
<div class="a" style="left:102px;top:817px;width:119px;height:34px;border-radius:17px;background:rgba(225,225,225,0.55)"></div>
<svg width="1440" height="876" style="left:0;top:0" fill="none">
<circle cx="118.8" cy="833.8" r="9.5" stroke="#c6c6c6" stroke-width="1.5"/>
<path d="M113.5 833.8 H124" stroke="#c6c6c6" stroke-width="1.5"/>
<circle cx="205" cy="833.8" r="9.5" stroke="#c6c6c6" stroke-width="1.5"/>
<path d="M199.7 833.8 H210.3 M205 828.5 V839" stroke="#c6c6c6" stroke-width="1.5"/>
</svg>
<div class="t" style="left:135.5px;top:824.5px;font-size:19px;color:#c2c2c2">100%</div>
<div class="a" style="left:73px;top:865px;width:55px;height:8px;border-radius:4px;background:#bdbdbd"></div>
<div class="t" style="left:996px;top:36.5px;width:16px;text-align:center;font-size:10px;color:#fff">1</div>
<!--END-->
<div class="a" style="left:0;top:0;width:1440px;height:876px;border-radius:10px;border:1px solid #d6d6d6;border-bottom:none;box-shadow:0 0 0 40px #e9e9e9;pointer-events:none"></div>
</body></html>
